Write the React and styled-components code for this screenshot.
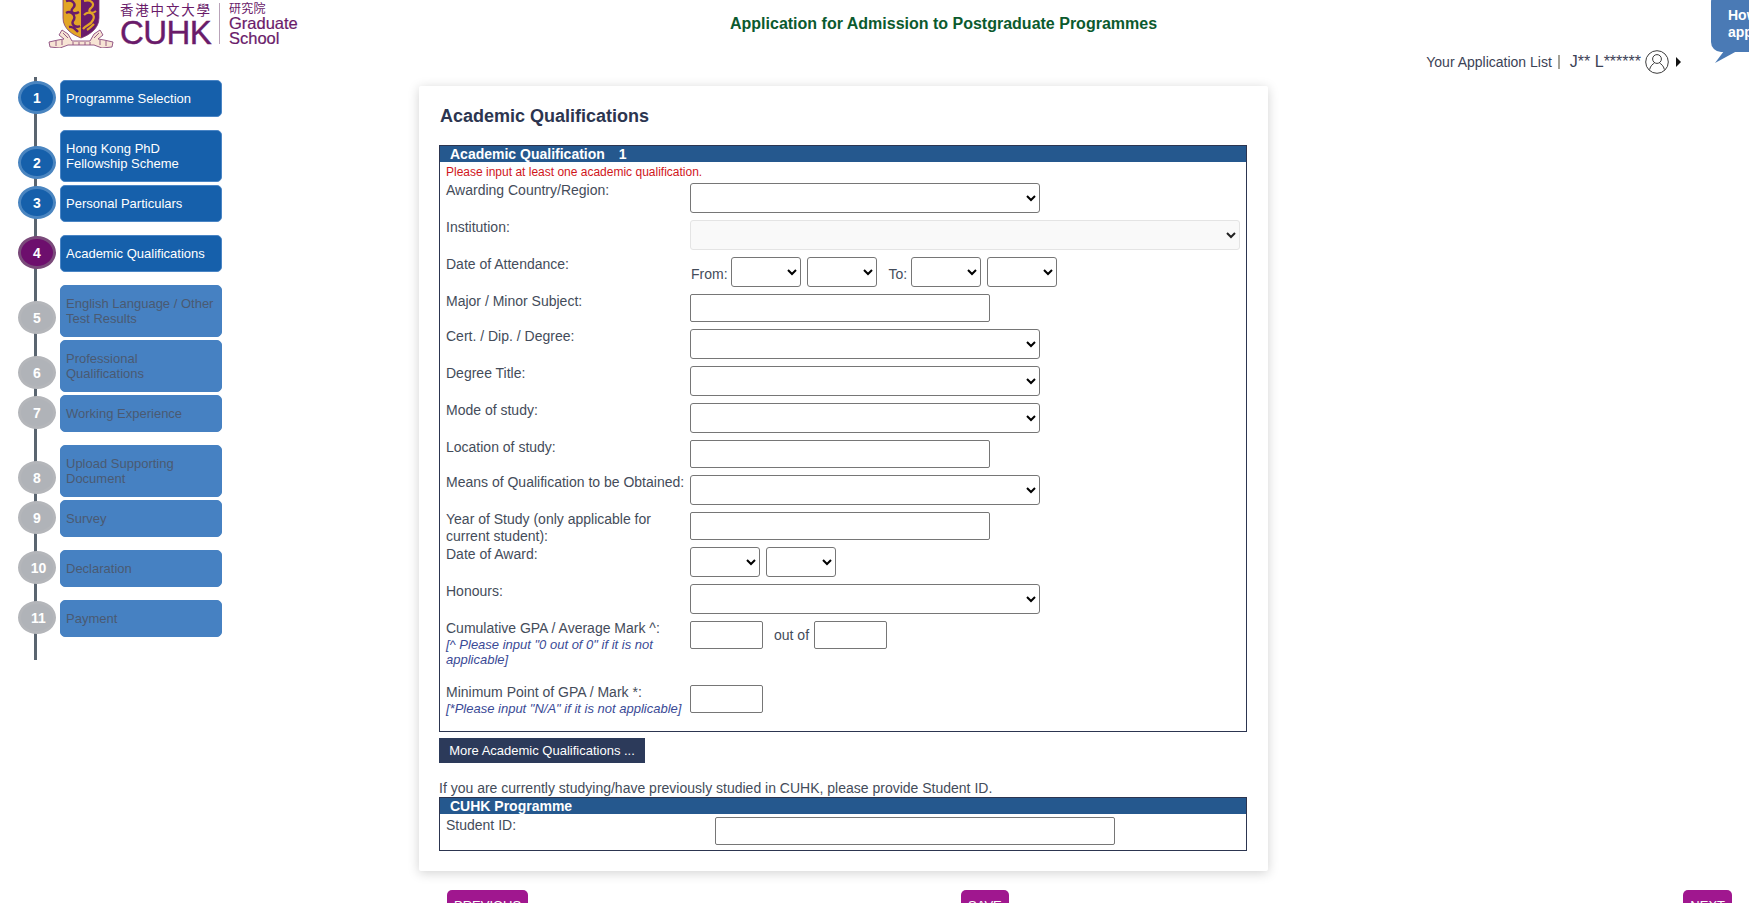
import styled, { createGlobalStyle } from "styled-components";

const GlobalStyle = createGlobalStyle`
  html, body {
    margin: 0;
    height: 100%;
    overflow: hidden;
    background: #fff;
  }
  body {
    font-family: "Liberation Sans", Arial, sans-serif;
    font-size: 14px;
    color: #444c5a;
  }
`;

const steps = [
  { n: 1, label: "Programme Selection", state: "done" },
  { n: 2, label: "Hong Kong PhD Fellowship Scheme", state: "done", tall: true },
  { n: 3, label: "Personal Particulars", state: "done" },
  { n: 4, label: "Academic Qualifications", state: "active" },
  { n: 5, label: "English Language / Other Test Results", state: "off", tall: true },
  { n: 6, label: "Professional Qualifications", state: "off", tall: true },
  { n: 7, label: "Working Experience", state: "off" },
  { n: 8, label: "Upload Supporting Document", state: "off", tall: true },
  { n: 9, label: "Survey", state: "off" },
  { n: 10, label: "Declaration", state: "off" },
  { n: 11, label: "Payment", state: "off" },
];

function Crest() {
  return (
    <CrestSvg viewBox="0 0 66 48" width="66" height="48">
      {/* shield, gold half and purple half */}
      <path d="M15 -4 H33 V38 C25 35 15 29 15 18 Z" fill="#e2a526" />
      <path d="M33 -4 H51 V18 C51 29 41 35 33 38 Z" fill="#6a1b6a" />
      <path d="M18 1 C24 -1 29 4 25 8 C21 12 26 15 31 12 M18 13 C23 10 29 16 25 21 C23 25 28 28 32 26 M21 27 C25 26 27 29 30 32" fill="none" stroke="#6a1b6a" strokeWidth="2.4" />
      <path d="M36 1 C43 -1 48 4 43 8 C39 11 43 15 48 11 M36 15 C41 10 48 14 45 20 C43 25 38 25 35 29 M39 30 C42 28 44 26 46 24" fill="none" stroke="#e2a526" strokeWidth="2.2" />
      <path d="M15 -4 V18 C15 29 25 35 33 38 C41 35 51 29 51 18 V-4" fill="none" stroke="#7a3b6e" strokeWidth="0.8" />
      {/* scroll */}
      <path d="M14 30 L20 34 L24 41 L42 41 L46 34 L52 30 L55 35 L50 39 L56 40 L65 42 L64 47 L54 48 L46 45 L20 45 L12 48 L2 47 L1 42 L10 40 L16 39 L11 35 Z" fill="#f7e4d4" stroke="#8a4a7c" strokeWidth="0.9" />
      <path d="M8 41 v5 M14 40 v5 M25 42 v3 M31 42 v3 M37 42 v3 M42 42 v3 M52 40 v5 M58 41 v5 M15 33 L20 38 M51 33 L46 38" stroke="#8a4a7c" strokeWidth="0.9" />
    </CrestSvg>
  );
}

function UserIcon() {
  return (
    <UserSvg viewBox="0 0 24 24" width="24" height="24" fill="none" stroke="#3c3c3c" strokeWidth="1">
      <circle cx="12" cy="12" r="11.3" />
      <circle cx="12" cy="9" r="4.4" />
      <path d="M4.6 19.6 C5.4 15.6 8 14 9.4 13 M19.4 19.6 C18.6 15.6 16 14 14.6 13" />
    </UserSvg>
  );
}

function Caret() {
  return (
    <svg viewBox="0 0 5 10" width="5" height="10">
      <path d="M0 0 L5 5 L0 10 Z" fill="#111" />
    </svg>
  );
}

function Bubble() {
  return (
    <HelpBubble>
      How<br />app
      <BubbleTail viewBox="0 0 22 12" width="22" height="12">
        <path d="M0 12 L9 0 L22 0 Z" fill="#4a7ab5" />
      </BubbleTail>
    </HelpBubble>
  );
}

export default function App() {
  return (
    <>
      <GlobalStyle />
      <Header>
        <Logo>
          <Crest />
          <LogoWords>
            <LogoChinese>香港中文大學</LogoChinese>
            <LogoCuhk>CUHK</LogoCuhk>
          </LogoWords>
          <LogoRule />
          <LogoSchool>
            <LogoChineseSmall>研究院</LogoChineseSmall>
            <span>Graduate</span>
            <span>School</span>
          </LogoSchool>
        </Logo>
        <Title>Application for Admission to Postgraduate Programmes</Title>
        <UserBar>
          <span>Your Application List</span>
          <Pipe />
          <UserName>J** L******</UserName>
          <UserIcon />
          <Caret />
        </UserBar>
      </Header>
      <Bubble />

      <Main>
        <Steps>
          {steps.map((s) => (
            <StepRow key={s.n} $tall={s.tall}>
              <Circle $state={s.state} $double={s.n > 9}>{s.n}</Circle>
              <StepLink $state={s.state} $tall={s.tall}>{s.label}</StepLink>
            </StepRow>
          ))}
        </Steps>

        <Card>
          <Heading>Academic Qualifications</Heading>

          <Panel>
            <PanelHead>Academic Qualification <Num>1</Num></PanelHead>
            <PanelBody>
              <Warning>Please input at least one academic qualification.</Warning>

              <Row>
                <Label>Awarding Country/Region:</Label>
                <Select />
              </Row>
              <Row>
                <Label>Institution:</Label>
                <Select $wide disabled />
              </Row>
              <Row>
                <Label>Date of Attendance:</Label>
                <Inline>
                  <InlineText>From:</InlineText>
                  <Select $small />
                  <Select $small />
                  <InlineText $to>To:</InlineText>
                  <Select $small />
                  <Select $small />
                </Inline>
              </Row>
              <Row $input>
                <Label>Major / Minor Subject:</Label>
                <Input />
              </Row>
              <Row>
                <Label>Cert. / Dip. / Degree:</Label>
                <Select />
              </Row>
              <Row>
                <Label>Degree Title:</Label>
                <Select />
              </Row>
              <Row>
                <Label>Mode of study:</Label>
                <Select />
              </Row>
              <Row $input>
                <Label>Location of study:</Label>
                <Input />
              </Row>
              <Row>
                <Label>Means of Qualification to be Obtained:</Label>
                <Select />
              </Row>
              <Row $input>
                <Label>Year of Study (only applicable for current student):</Label>
                <Input />
              </Row>
              <Row>
                <Label>Date of Award:</Label>
                <Inline>
                  <Select $small />
                  <Select $small />
                </Inline>
              </Row>
              <Row>
                <Label>Honours:</Label>
                <Select />
              </Row>
              <Row $height={64}>
                <Label>
                  Cumulative GPA / Average Mark ^:
                  <Note>[^ Please input "0 out of 0" if it is not applicable]</Note>
                </Label>
                <Inline>
                  <Input $short />
                  <OutOf>out of</OutOf>
                  <Input $short />
                </Inline>
              </Row>
              <Row $height={46}>
                <Label>
                  Minimum Point of GPA / Mark *:
                  <Note>[*Please input "N/A" if it is not applicable]</Note>
                </Label>
                <Input $short />
              </Row>
            </PanelBody>
          </Panel>

          <MoreButton>More Academic Qualifications ...</MoreButton>

          <Hint>If you are currently studying/have previously studied in CUHK, please provide Student ID.</Hint>

          <Panel>
            <PanelHead>CUHK Programme</PanelHead>
            <StudentRow>
              <Label>Student ID:</Label>
              <Input $long />
            </StudentRow>
          </Panel>
        </Card>
      </Main>

      <Footer>
        <PurpleButton>PREVIOUS</PurpleButton>
        <PurpleButton>SAVE</PurpleButton>
        <PurpleButton>NEXT</PurpleButton>
      </Footer>
    </>
  );
}

const Header = styled.header`
  display: grid;
  grid-template-columns: 730px 1fr;
  grid-template-rows: 47px 30px;
  padding-right: 68px;
`;

const Logo = styled.div`
  grid-row: 1 / 3;
  display: flex;
  align-items: flex-start;
  padding-left: 48px;
  color: #6a1b6a;
`;

const CrestSvg = styled.svg`
  flex: none;
  margin-right: 6px;
`;

const LogoWords = styled.div`
  display: flex;
  flex-direction: column;
  width: 99px;
`;

const LogoChinese = styled.div`
  font-family: "Noto Sans CJK TC", sans-serif;
  font-size: 13.5px;
  line-height: 18px;
  letter-spacing: 1.8px;
  white-space: nowrap;
`;

const LogoCuhk = styled.div`
  font-size: 33px;
  line-height: 30px;
  letter-spacing: -0.6px;
  -webkit-text-stroke: 0.4px #6a1b6a;
`;

const LogoRule = styled.div`
  flex: none;
  width: 1px;
  height: 41px;
  margin: 3px 9px 0 0;
  background: #b9a3b9;
`;

const LogoSchool = styled.div`
  display: flex;
  flex-direction: column;
  font-size: 16.5px;
  line-height: 15px;
  -webkit-text-stroke: 0.2px #6a1b6a;
`;

const LogoChineseSmall = styled.span`
  font-family: "Noto Sans CJK TC", sans-serif;
  font-size: 12px;
  line-height: 16px;
  letter-spacing: 0.3px;
  -webkit-text-stroke: 0;
`;

const Title = styled.h1`
  margin: 15px 0 0;
  font-size: 16px;
  line-height: 18px;
  font-weight: 700;
  color: #0b5a2e;
`;

const UserBar = styled.div`
  grid-column: 2;
  display: flex;
  align-items: center;
  justify-content: flex-end;
  height: 30px;
  color: #3c4256;
`;

const Pipe = styled.i`
  width: 2px;
  height: 14px;
  margin: 0 10px 0 6px;
  background: #a5a297;
`;

const UserName = styled.span`
  margin-right: 4px;
  font-size: 16px;
`;

const UserSvg = styled.svg`
  margin-right: 7px;
`;

const HelpBubble = styled.aside`
  position: absolute;
  top: -8px;
  right: 0;
  width: 38px;
  height: 60px;
  box-sizing: border-box;
  padding: 15px 0 0 17px;
  background: #4a7ab5;
  border-radius: 10px 0 0 10px;
  color: #fff;
  font-size: 14px;
  font-weight: 700;
  line-height: 17px;
`;

const BubbleTail = styled.svg`
  position: absolute;
  left: 4px;
  top: 59px;
`;

const Main = styled.main`
  display: flex;
`;

const Steps = styled.nav`
  position: relative;
  flex: none;
  width: 204px;
  height: 583px;
  padding: 0 197px 0 18px;
  display: flex;
  flex-direction: column;

  &::before {
    content: "";
    position: absolute;
    left: 34px;
    top: 0;
    bottom: 0;
    width: 3px;
    background: #5a6570;
  }
`;

const StepRow = styled.div`
  position: relative;
  display: flex;
  align-items: flex-end;
  gap: 4px;
  margin-top: 3px;
  margin-bottom: ${(p) => (p.$tall ? "0" : "10px")};
`;

const Circle = styled.div`
  flex: none;
  box-sizing: border-box;
  width: 38px;
  height: 33px;
  margin-bottom: 3px;
  padding-left: ${(p) => (p.$double ? "3px" : "0")};
  border-radius: 50%;
  border: 3px solid ${(p) => ({ done: "#4a85c0", active: "#7a4a7a", off: "#b4b6ba" }[p.$state])};
  background: ${(p) => ({ done: "#1660ab", active: "#6d0f6d", off: "#b0b3b8" }[p.$state])};
  color: #fff;
  font-size: 14px;
  font-weight: 700;
  line-height: 28px;
  text-align: center;
`;

const StepLink = styled.a`
  flex: none;
  box-sizing: border-box;
  width: 162px;
  height: ${(p) => (p.$tall ? "52px" : "37px")};
  display: flex;
  align-items: center;
  padding: 0 5px;
  border: 1px solid ${(p) => (p.$state === "off" ? "#4681c2" : "#4a85c5")};
  border-radius: 5px;
  background: ${(p) => (p.$state === "off" ? "#4681c2" : "#1660ab")};
  color: ${(p) => (p.$state === "off" ? "#4a5a72" : "#fff")};
  font-size: 13px;
  line-height: 15px;
`;

const Card = styled.section`
  flex: none;
  box-sizing: border-box;
  width: 849px;
  height: 785px;
  margin-top: 9px;
  padding: 20px 21px 0 20px;
  background: #fff;
  border-radius: 2px;
  box-shadow: 0 2px 12px rgba(0, 0, 0, 0.18);
`;

const Heading = styled.h2`
  margin: 0 0 18px 1px;
  font-size: 18px;
  line-height: 21px;
  font-weight: 700;
  color: #2c3550;
`;

const Panel = styled.div`
  border: 1px solid #2c3550;
`;

const PanelHead = styled.div`
  height: 16px;
  padding-left: 10px;
  background: #25588e;
  color: #fff;
  font-size: 14px;
  font-weight: 700;
  line-height: 17px;
`;

const Num = styled.span`
  margin-left: 10px;
`;

const PanelBody = styled.div`
  padding: 3px 6px 0;
`;

const Warning = styled.div`
  height: 18px;
  color: #d0161b;
  font-size: 12px;
  line-height: 15px;
`;

const Row = styled.div`
  display: flex;
  align-items: flex-start;
  height: ${(p) => (p.$height ? `${p.$height}px` : p.$input ? "35px" : "37px")};
`;

const Label = styled.div`
  flex: none;
  width: 244px;
  margin-top: -1px;
  box-sizing: border-box;
  line-height: 17px;
`;

const Note = styled.div`
  color: #3a4a96;
  font-size: 13px;
  font-style: italic;
  line-height: 15px;
`;

const Select = styled.select`
  box-sizing: border-box;
  width: ${(p) => (p.$wide ? "550px" : p.$small ? "70px" : "350px")};
  height: 30px;
  background: #fff;
  border: 1px solid #767676;
  border-radius: 3px;

  &:disabled {
    background: #f9f9f9;
    border-color: #e4e4e4;
    color: #222;
    opacity: 1;
  }
`;

const Input = styled.input`
  box-sizing: border-box;
  width: ${(p) => (p.$long ? "400px" : p.$short ? "73px" : "300px")};
  height: 28px;
  background: #fff;
  border: 1px solid #767676;
  border-radius: 2px;
`;

const Inline = styled.div`
  display: flex;
  align-items: flex-end;
  gap: 6px;
`;

const InlineText = styled.span`
  line-height: 26px;
  margin: ${(p) => (p.$to ? "0 -2px 0 6px" : "0 -3px 0 1px")};
  color: #444c5a;
`;

const OutOf = styled.span`
  align-self: center;
  margin: 0 -1px 0 5px;
`;

const MoreButton = styled.button`
  display: block;
  width: 206px;
  height: 25px;
  margin-top: 6px;
  padding: 0;
  border: none;
  background: #2c3a5a;
  color: #fff;
  font-family: inherit;
  font-size: 13px;
`;

const Hint = styled.p`
  margin: 17px 0 0;
  height: 17px;
  line-height: 17px;
`;

const StudentRow = styled.div`
  display: flex;
  justify-content: space-between;
  height: 36px;
  padding: 3px 131px 0 6px;
  box-sizing: border-box;

  ${Label} {
    width: auto;
    margin-top: 0;
  }
`;

const Footer = styled.footer`
  display: grid;
  grid-template-columns: 514px 1fr auto;
  justify-items: start;
  width: 1285px;
  margin: 19px 0 0 447px;
`;

const PurpleButton = styled.button`
  height: 30px;
  padding: 0 7px;
  border: none;
  border-radius: 5px;
  background: #a0178f;
  color: #fff;
  font-family: inherit;
  font-size: 13px;
`;
